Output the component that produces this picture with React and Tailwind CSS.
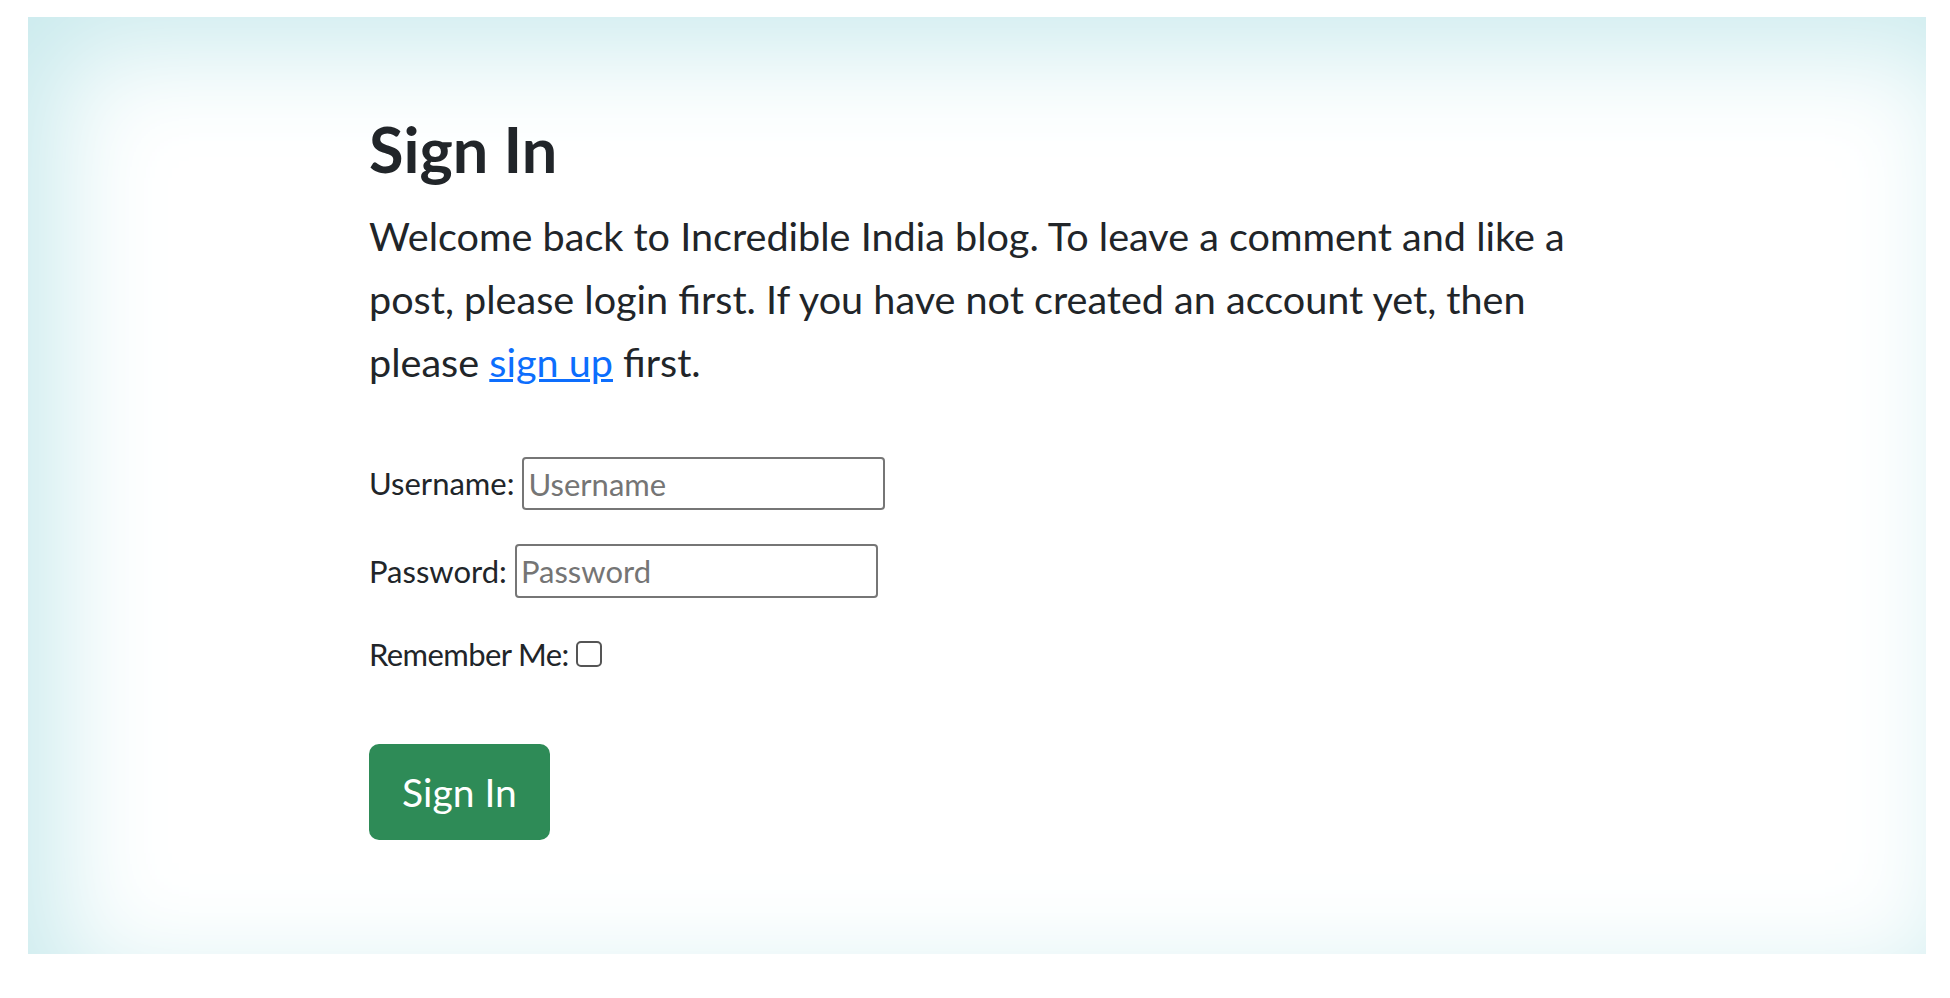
export default function App() {
  return (
    <div className="min-h-screen bg-white pt-[17px] pl-[28px] font-['Lato','Liberation_Sans',sans-serif] text-[#212529]">
      <div className="w-[1898px] h-[937px] bg-white shadow-[inset_30px_30px_110px_#c9eaed]">
        <div className="ml-[341px] w-[1241px] pt-[95px]">
          <h2 className="text-[63px] leading-[74px] font-bold mb-[18px]">Sign In</h2>
          <p className="text-[39.6px] leading-[63px]">
            Welcome back to Incredible India blog. To leave a comment and like a post, please login first. If you have not created an account yet, then please{' '}
            <a href="#" className="text-[#0d6efd] underline">sign up</a> first.
          </p>

          {/* Form */}
          <form className="mt-[64px] text-[31px]" onSubmit={(e) => e.preventDefault()}>
            <div className="flex items-center gap-2 h-[53px]">
              <label htmlFor="username">Username:</label>
              <input
                id="username"
                type="text"
                placeholder="Username"
                className="w-[363px] h-[53px] border-2 border-[#767676] rounded-[4px] px-[4px] text-[31px] placeholder:text-[#757575] outline-none"
              />
            </div>
            <div className="flex items-center gap-2 h-[54px] mt-[34px]">
              <label htmlFor="password">Password:</label>
              <input
                id="password"
                type="password"
                placeholder="Password"
                className="w-[363px] h-[54px] border-2 border-[#767676] rounded-[4px] px-[4px] text-[31px] placeholder:text-[#757575] outline-none"
              />
            </div>
            <div className="flex items-center gap-[7px] h-[53px] mt-[30px]">
              <label htmlFor="remember" className="tracking-[-0.6px]">Remember Me:</label>
              <input
                id="remember"
                type="checkbox"
                className="appearance-none w-[26px] h-[26px] border-2 border-[#555] rounded-[5px] bg-white -mt-[2px]"
              />
            </div>
            <button
              type="submit"
              className="mt-[63px] w-[181px] h-[96px] rounded-[10px] bg-[#2e8b57] text-white text-[39px]"
            >
              Sign In
            </button>
          </form>
        </div>
      </div>
    </div>
  )
}
